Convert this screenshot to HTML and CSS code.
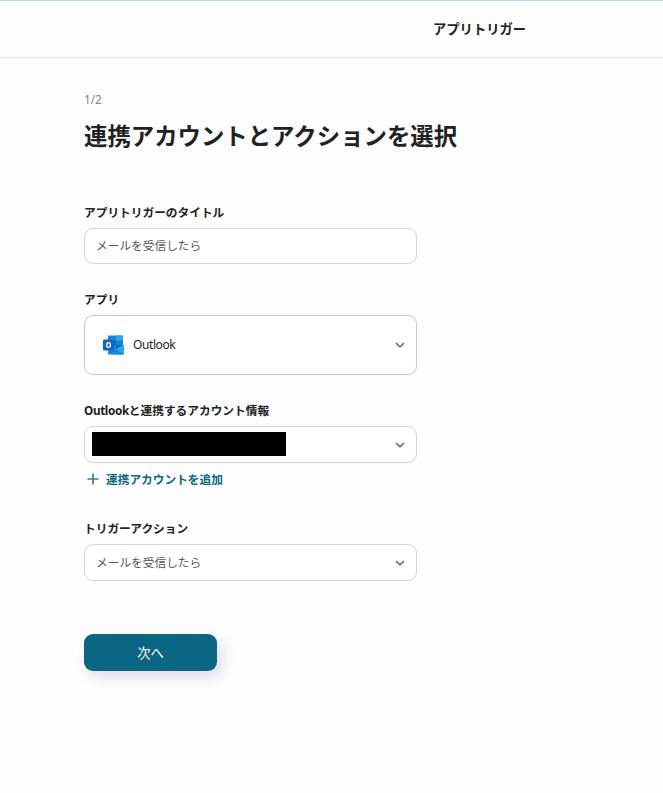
FILE: index.html
```html
<!DOCTYPE html>
<html lang="ja">
<head>
  <meta charset="UTF-8" />
  <meta name="viewport" content="width=device-width, initial-scale=1.0"/>
  <title>アプリトリガー</title>
  <link rel="stylesheet" href="styles.css">
</head>
<body>
  <header class="header">
    <div class="header-title">アプリトリガー</div>
  </header>

  <main class="content">
    <p class="step">1/2</p>
    <h1>連携アカウントとアクションを選択</h1>

    <div class="field field-title">
      <div class="label">アプリトリガーのタイトル</div>
      <div class="box box-title">メールを受信したら</div>
    </div>

    <div class="field field-app">
      <div class="label">アプリ</div>
      <div class="box box-app">
        <svg class="app-icon" width="22" height="20" viewBox="0 0 22 20">
          <path d="M5 1.500Q5 .5 6 .5H19Q20 .5 20 1.500V14H5z" fill="#1683d8"/>
          <path d="M13 .5H19Q20 .5 20 1.500V5.500H13z" fill="#2fa5e8"/>
          <path d="M6 5.500H13V10H6z" fill="#0c64b8"/>
          <path d="M13 10H20V15H13z" fill="#0f6cc0"/>
          <path d="M21 9.500V18.500Q21 19.500 20 19.500H10V16z" fill="#2ba7e9"/>
          <path d="M5 10L21 19Q20.700 19.500 20 19.500H6Q5 19.500 5 18.500z" fill="#1985d8"/>
          <rect x="0" y="4.500" width="11" height="11" rx="1" fill="#0f68be"/>
          <ellipse cx="5.500" cy="10" rx="1.900" ry="2.300" fill="none" stroke="#fff" stroke-width="1.300"/>
        </svg>
        <span class="app-name">Outlook</span>
        <svg class="arrow" width="10" height="6" viewBox="0 0 10 6"><path d="M1 1L5 4.800L9 1"/></svg>
      </div>
    </div>

    <div class="field field-account">
      <div class="label"><span class="label-app">Outlook</span>と連携するアカウント情報</div>
      <div class="box box-account">
        <span class="masked"></span>
        <svg class="arrow" width="10" height="6" viewBox="0 0 10 6"><path d="M1 1L5 4.800L9 1"/></svg>
      </div>
      <div class="add-account">
        <svg class="plus" width="12" height="12" viewBox="0 0 12 12"><path d="M6 .5V11.500M.5 6H11.500"/></svg>
        連携アカウントを追加
      </div>
    </div>

    <div class="field field-action">
      <div class="label">トリガーアクション</div>
      <div class="box box-action">
        <span class="action-name">メールを受信したら</span>
        <svg class="arrow" width="10" height="6" viewBox="0 0 10 6"><path d="M1 1L5 4.800L9 1"/></svg>
      </div>
    </div>

    <button class="next" type="button">次へ</button>
  </main>
</body>
</html>
```
FILE: styles.css
```css
* {
  box-sizing: border-box;
}

body {
  margin: 0;
  min-height: 100vh;
  font-family: "Noto Sans", "Noto Sans CJK JP", sans-serif;
  font-size: 11.7px;
  color: #222;
  background-color: #fdfdfd;
}

.header {
  height: 58px;
  display: flex;
  align-items: center;
  padding-left: 433px;
  border-top: 1px solid #b9d3dd;
  border-bottom: 1px solid #e0e2e3;
}

.header-title {
  font-size: 13.3px;
  font-weight: 600;
  line-height: 20px;
}

.content {
  padding: 33px 0 0 84px;
}

.step {
  margin: 0;
  font-size: 11.7px;
  line-height: 16px;
  color: #7a8894;
}

h1 {
  margin: 12px 0 0;
  font-size: 23.4px;
  font-weight: 700;
  line-height: 34px;
}

.field {
  width: 333px;
}

.field-title {
  margin-top: 51px;
}

.field-app {
  margin-top: 27px;
}

.field-account {
  margin-top: 27px;
}

.field-action {
  margin-top: 33px;
}

.label {
  height: 16px;
  margin-bottom: 8px;
  line-height: 16px;
  font-weight: 700;
  white-space: nowrap;
}

.label-app {
  letter-spacing: -0.35px;
}

.box {
  height: 36px;
  display: flex;
  align-items: center;
  padding: 0 11px;
  border: 1px solid #cfd3e2;
  border-radius: 9px;
  background-color: #fff;
  color: #555;
}

.box-title {
  padding-bottom: 3px;
}

.box-app {
  height: 60px;
  padding-left: 18px;
  border-color: #c5c8cc;
}

.box-account {
  height: 37px;
  padding-left: 7px;
}

.box-action {
  height: 37px;
}

.action-name {
  padding-bottom: 3px;
}

.app-name {
  margin-left: 8px;
  padding-bottom: 1px;
  font-size: 12px;
  letter-spacing: -0.4px;
  color: #222;
}

.arrow {
  margin-left: auto;
  fill: none;
  stroke: #6d6d6d;
  stroke-width: 1.7;
}

.masked {
  width: 194px;
  height: 24px;
  margin-bottom: 1px;
  background-color: #000;
}

.add-account {
  display: flex;
  align-items: center;
  gap: 7px;
  height: 16px;
  margin-top: 8px;
  padding-left: 3px;
  line-height: 16px;
  font-weight: 600;
  color: #0b6683;
}

.plus {
  fill: none;
  stroke: #2c7c93;
  stroke-width: 1.6;
}

.next {
  display: block;
  width: 133px;
  height: 37px;
  margin-top: 53px;
  padding: 0;
  border: none;
  border-radius: 9px;
  background-color: #0b6683;
  color: #fff;
  font-family: inherit;
  font-size: 13.3px;
  box-shadow: 5px 6px 14px rgba(60, 50, 110, 0.16);
}
```
